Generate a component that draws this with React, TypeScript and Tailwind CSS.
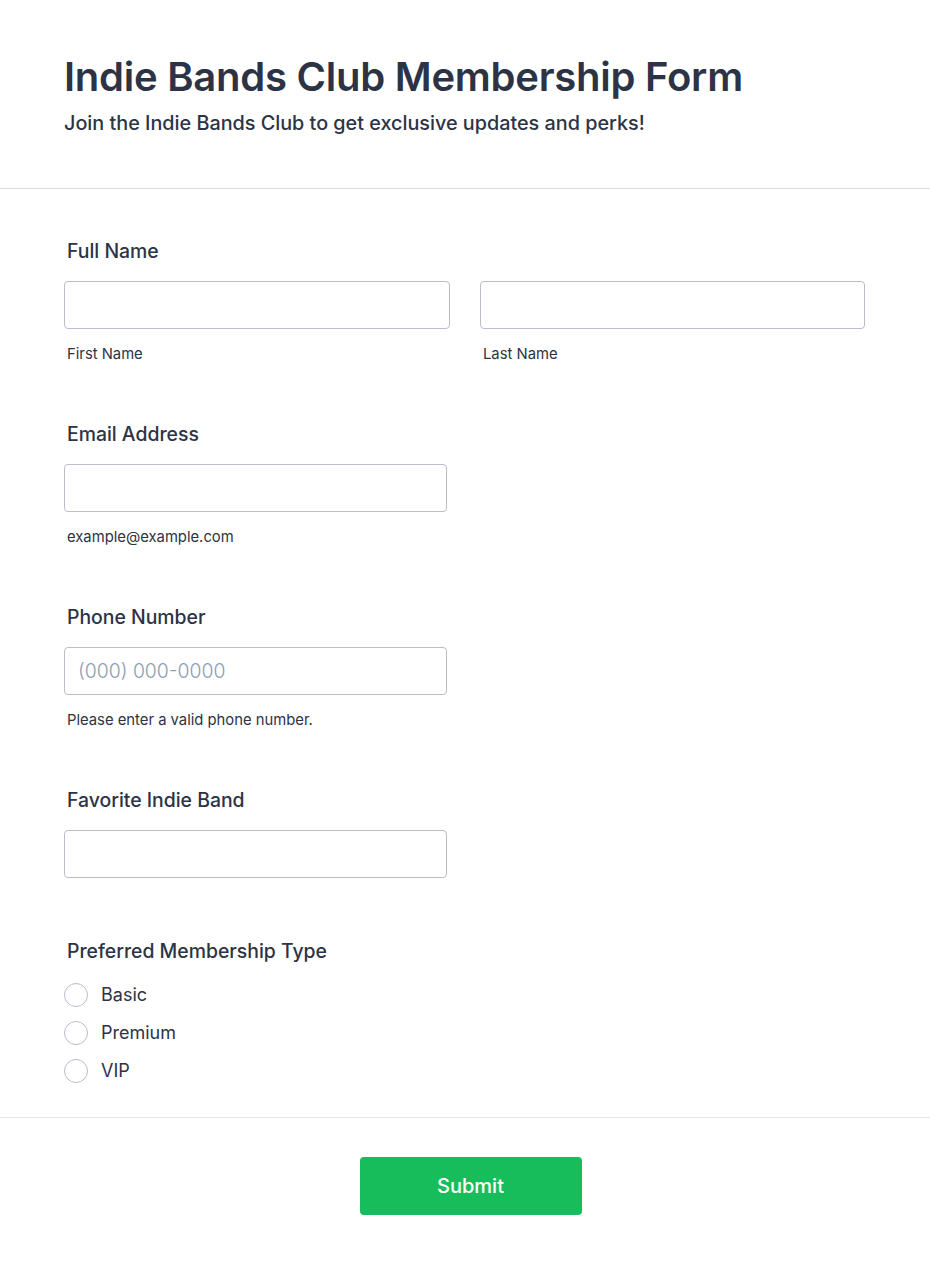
import React from "react";

const font = { fontFamily: "Inter, 'Noto Sans', sans-serif" };

function Label({ children }: { children: React.ReactNode }) {
  return (
    <div className="pl-[3px] text-[19.4px] leading-[28px] font-medium text-[#2c3345]">{children}</div>
  );
}

function Input({ placeholder, className = "" }: { placeholder?: string; className?: string }) {
  return (
    <input
      placeholder={placeholder}
      className={`h-[48px] rounded-[4px] border border-[#b8bdc9] bg-white px-[13px] text-[19.4px] font-light text-[#2c3345] placeholder:text-[#8f9bb3] outline-none ${className}`}
    />
  );
}

function Sub({ children }: { children: React.ReactNode }) {
  return <div className="mt-[15px] pl-[3px] text-[14.8px] leading-[20px] text-[#2c3345]">{children}</div>;
}

export default function App() {
  return (
    <div className="min-h-[1265px] w-full bg-white" style={font}>
      <header className="px-[64px] pt-[53px] pb-[51px]">
        <h1 className="text-[40px] leading-[48px] font-semibold text-[#2c3345] tracking-[-0.25px]">
          Indie Bands Club Membership Form
        </h1>
        <p className="mt-[8px] text-[19.8px] leading-[28px] font-medium text-[#2c3345]">
          Join the Indie Bands Club to get exclusive updates and perks!
        </p>
      </header>
      <div className="h-px bg-[#d8dbe6]" />
      <main className="px-[64px] pt-[48px]">
        <section>
          <Label>Full Name</Label>
          <div className="mt-[16px] grid grid-cols-[386px_385px] gap-x-[30px]">
            <div className="flex flex-col">
              <Input className="w-full" />
              <Sub>First Name</Sub>
            </div>
            <div className="flex flex-col">
              <Input className="w-full" />
              <Sub>Last Name</Sub>
            </div>
          </div>
        </section>
        <section className="mt-[56px]">
          <Label>Email Address</Label>
          <div className="mt-[16px] flex flex-col">
            <Input className="w-[383px]" />
            <Sub>example@example.com</Sub>
          </div>
        </section>
        <section className="mt-[56px]">
          <Label>Phone Number</Label>
          <div className="mt-[16px] flex flex-col">
            <Input className="w-[383px]" placeholder="(000) 000-0000" />
            <Sub>Please enter a valid phone number.</Sub>
          </div>
        </section>
        <section className="mt-[56px]">
          <Label>Favorite Indie Band</Label>
          <div className="mt-[16px] flex flex-col">
            <Input className="w-[383px]" />
          </div>
        </section>
        <section className="mt-[59px]">
          <Label>Preferred Membership Type</Label>
          <div className="mt-[18px] flex flex-col gap-[14px]">
            {["Basic", "Premium", "VIP"].map((o) => (
              <label key={o} className="flex items-center h-[24px]">
                <span className="w-[24px] h-[24px] rounded-full border border-[#b8bdc9] bg-white" />
                <span className="ml-[13px] text-[18px] leading-[24px] text-[#2c3345]">{o}</span>
              </label>
            ))}
          </div>
        </section>
      </main>
      <div className="mt-[34px] h-px bg-[#e3e6ef]" />
      <div className="flex justify-center pt-[39px] pb-[50px] pl-[11px]">
        <button className="w-[222px] h-[58px] rounded-[4px] bg-[#18bd5b] text-white text-[20px] font-medium">
          Submit
        </button>
      </div>
    </div>
  );
}
